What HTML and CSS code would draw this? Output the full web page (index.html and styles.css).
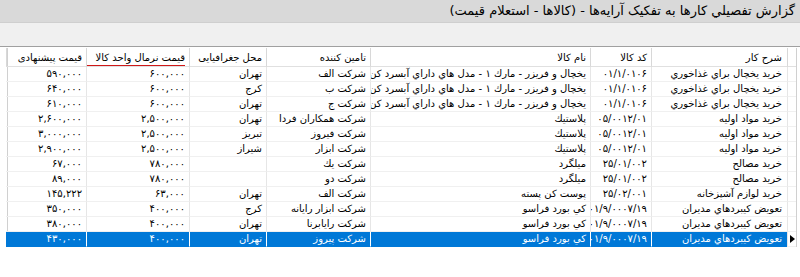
FILE: index.html
```html
<!DOCTYPE html>
<html lang="fa">
<head>
<meta charset="utf-8">
<link rel="stylesheet" href="styles.css">
</head>
<body>
<div class="title">گزارش تفصيلي كارها به تفكيک آرايه‌ها - (کالاها - استعلام قیمت)</div>
<div class="toolbar"></div>
<div class="grid">
  <div class="h ind"></div>
  <div class="h">شرح کار</div>
  <div class="h">کد کالا</div>
  <div class="h">نام کالا</div>
  <div class="h">تامین کننده</div>
  <div class="h">محل جغرافیایی</div>
  <div class="h"><span class="sorted">قیمت نرمال واحد کالا</span></div>
  <div class="h">قیمت پیشنهادی</div>

  <div class="c ind"></div><div class="c">خرید يخچال براي غذاخوري</div><div class="c"><span class="ltr">۰۱/۱/۰۱۰۶</span></div><div class="c">يخچال و فريزر - مارك ۱ - مدل هاي داراي آبسرد كن</div><div class="c">شرکت الف</div><div class="c">تهران</div><div class="c"><span class="ltr">۶۰۰,۰۰۰</span></div><div class="c"><span class="ltr">۵۹۰,۰۰۰</span></div>

  <div class="c ind"></div><div class="c">خرید يخچال براي غذاخوري</div><div class="c"><span class="ltr">۰۱/۱/۰۱۰۶</span></div><div class="c">يخچال و فريزر - مارك ۱ - مدل هاي داراي آبسرد كن</div><div class="c">شرکت ب</div><div class="c">کرج</div><div class="c"><span class="ltr">۶۰۰,۰۰۰</span></div><div class="c"><span class="ltr">۶۴۰,۰۰۰</span></div>

  <div class="c ind"></div><div class="c">خرید يخچال براي غذاخوري</div><div class="c"><span class="ltr">۰۱/۱/۰۱۰۶</span></div><div class="c">يخچال و فريزر - مارك ۱ - مدل هاي داراي آبسرد كن</div><div class="c">شرکت ج</div><div class="c">تهران</div><div class="c"><span class="ltr">۶۰۰,۰۰۰</span></div><div class="c"><span class="ltr">۶۱۰,۰۰۰</span></div>

  <div class="c ind"></div><div class="c">خرید مواد اولیه</div><div class="c"><span class="ltr">۰۵/۰۰۱۲/۰۱</span></div><div class="c">پلاستيك</div><div class="c">شرکت همکاران فردا</div><div class="c">تهران</div><div class="c"><span class="ltr">۲,۵۰۰,۰۰۰</span></div><div class="c"><span class="ltr">۲,۶۰۰,۰۰۰</span></div>

  <div class="c ind"></div><div class="c">خرید مواد اولیه</div><div class="c"><span class="ltr">۰۵/۰۰۱۲/۰۱</span></div><div class="c">پلاستيك</div><div class="c">شرکت فیروز</div><div class="c">تبریز</div><div class="c"><span class="ltr">۲,۵۰۰,۰۰۰</span></div><div class="c"><span class="ltr">۳,۰۰۰,۰۰۰</span></div>

  <div class="c ind"></div><div class="c">خرید مواد اولیه</div><div class="c"><span class="ltr">۰۵/۰۰۱۲/۰۱</span></div><div class="c">پلاستيك</div><div class="c">شرکت ابزار</div><div class="c">شیراز</div><div class="c"><span class="ltr">۲,۵۰۰,۰۰۰</span></div><div class="c"><span class="ltr">۲,۹۰۰,۰۰۰</span></div>

  <div class="c ind"></div><div class="c">خرید مصالح</div><div class="c"><span class="ltr">۲۵/۰۱/۰۰۲</span></div><div class="c">میلگرد</div><div class="c">شرکت يك</div><div class="c"></div><div class="c"><span class="ltr">۷۸۰,۰۰۰</span></div><div class="c"><span class="ltr">۶۷,۰۰۰</span></div>

  <div class="c ind"></div><div class="c">خرید مصالح</div><div class="c"><span class="ltr">۲۵/۰۱/۰۰۲</span></div><div class="c">میلگرد</div><div class="c">شرکت دو</div><div class="c"></div><div class="c"><span class="ltr">۷۸۰,۰۰۰</span></div><div class="c"><span class="ltr">۸۹,۰۰۰</span></div>

  <div class="c ind"></div><div class="c">خرید لوازم آشپزخانه</div><div class="c"><span class="ltr">۲۵/۰۲/۰۰۱</span></div><div class="c">پوست کن پسته</div><div class="c">شرکت الف</div><div class="c">تهران</div><div class="c"><span class="ltr">۶۳,۰۰۰</span></div><div class="c"><span class="ltr">۱۴۵,۲۲۲</span></div>

  <div class="c ind"></div><div class="c">تعویض کیبردهاي مدیران</div><div class="c"><span class="ltr">۰۱/۹/۰۰۰۷/۱۹</span></div><div class="c">کي بورد فراسو</div><div class="c">شرکت ابزار رایانه</div><div class="c">کرج</div><div class="c"><span class="ltr">۴۰۰,۰۰۰</span></div><div class="c"><span class="ltr">۳۵۰,۰۰۰</span></div>

  <div class="c ind"></div><div class="c">تعویض کیبردهاي مدیران</div><div class="c"><span class="ltr">۰۱/۹/۰۰۰۷/۱۹</span></div><div class="c">کي بورد فراسو</div><div class="c">شرکت رایابرنا</div><div class="c">تهران</div><div class="c"><span class="ltr">۴۰۰,۰۰۰</span></div><div class="c"><span class="ltr">۳۸۰,۰۰۰</span></div>

  <div class="c ind cur"><span class="arrow"></span></div><div class="c sel">تعویض کیبردهاي مدیران</div><div class="c sel"><span class="ltr">۰۱/۹/۰۰۰۷/۱۹</span></div><div class="c sel">کي بورد فراسو</div><div class="c sel">شرکت پیروز</div><div class="c sel">تهران</div><div class="c sel"><span class="ltr">۴۰۰,۰۰۰</span></div><div class="c sel"><span class="ltr">۴۳۰,۰۰۰</span></div>
</div>
</body>
</html>
```

FILE: styles.css
```css
html, body {
  margin: 0;
  padding: 0;
  background: #ffffff;
}
body {
  width: 800px;
  height: 277px;
  overflow: hidden;
  font-family: Tahoma, "DejaVu Sans", sans-serif;
  color: #000;
}
.title {
  direction: rtl;
  height: 22px;
  line-height: 22px;
  background: #d9d9d9;
  font-size: 13px;
  padding-right: 5px;
  white-space: nowrap;
}
.toolbar {
  height: 23px;
  background: #f0f0f0;
  border-top: 1px solid #cfcfcf;
  border-bottom: 1px solid #a0a0a0;
}
.grid {
  direction: rtl;
  display: grid;
  grid-template-columns: 9px 136px 61px 220px 104px 77px 103px 80px;
  margin: 1px 3px 0 7px;
  border-right: 1px solid #d0d0d0;
  border-left: 1px solid #d0d0d0;
}
.h, .c {
  box-sizing: border-box;
  font-size: 10px;
  white-space: nowrap;
  overflow: hidden;
  padding-right: 4px;
  text-align: right;
}
.h {
  height: 19px;
  line-height: 18px;
  padding-top: 1px;
  border-left: 1px solid #d8d8d8;
  border-bottom: 1px solid #e0e0e0;
}
.h:nth-child(2) { padding-right: 5px; }
.h:last-child { border-left: none; }
.c {
  height: 15px;
  line-height: 14px;
  border-left: 1px solid #e6e6e6;
  border-bottom: 1px solid #f0f0f0;
}
.c:nth-child(8n+2) { padding-right: 5px; }
.c:nth-child(8n) { border-left: none; }
.ind { padding: 0; }
.sorted {
  display: inline-block;
  padding-left: 9px;
  line-height: 14px;
  border-bottom: 2px solid #d01818;
}
.ltr {
  direction: ltr;
  unicode-bidi: isolate;
}
.sel {
  background: #0078d7;
  color: #ffffff;
  border-left-color: #ffffff;
  border-bottom-color: #0078d7;
}
.cur {
  display: flex;
  align-items: center;
  justify-content: center;
}
.arrow {
  width: 0;
  height: 0;
  border-top: 4px solid transparent;
  border-bottom: 4px solid transparent;
  border-left: 5px solid #000;
}
```
